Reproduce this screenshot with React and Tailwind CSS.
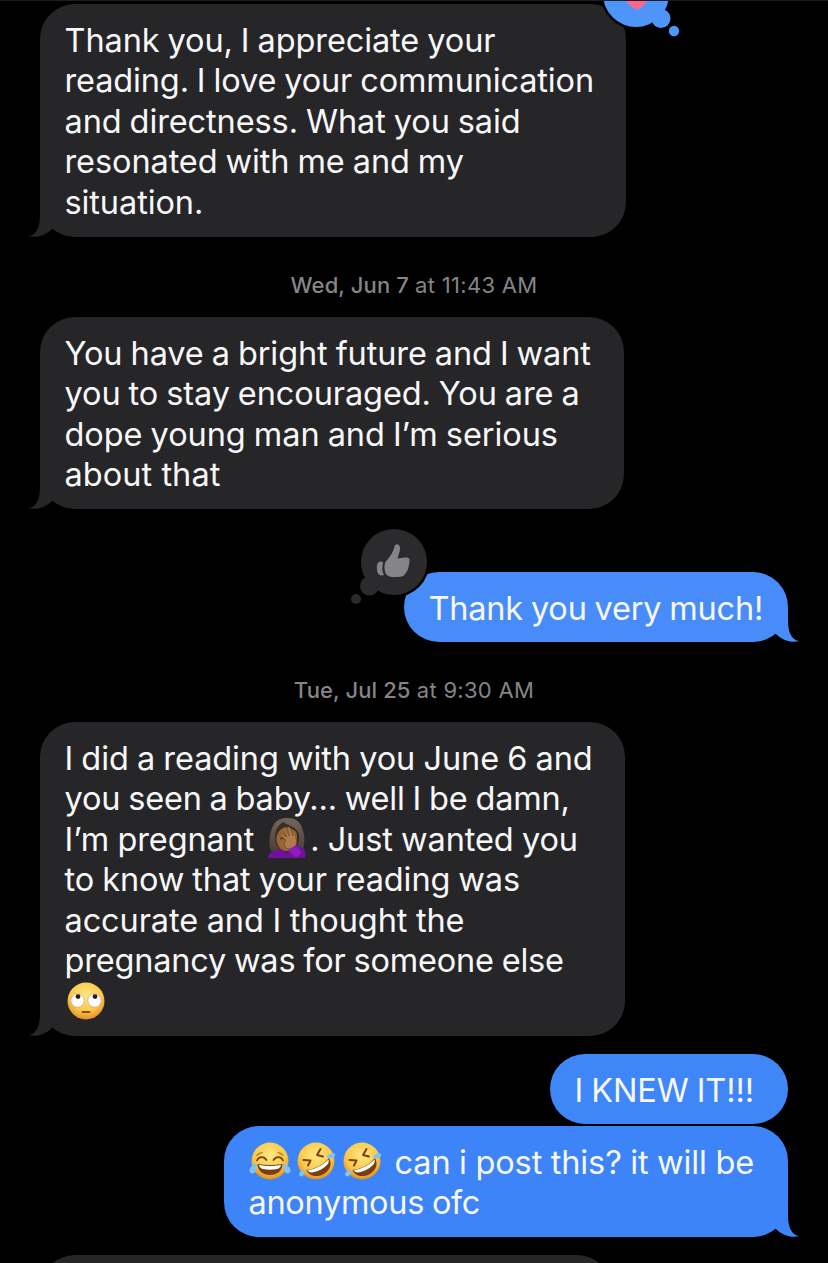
import React from "react";
import clsx from "clsx";

const Tail = ({ mine, className }) => (
    <svg
        viewBox="0 0 30 34"
        className={clsx(
            "absolute bottom-0 h-[34px] w-[30px]",
            mine ? "-right-[11px] -scale-x-100" : "-left-[11px] text-[#262629]",
            className
        )}
    >
        <path
            d="M11 0V12C11 24 8 31 0 33.3C9 35 17 32 23 26L30 20V0Z"
            fill="currentColor"
        />
    </svg>
);

const Bubble = ({ mine, tail, tailClass, reaction, className, children }) => (
    <div
        className={clsx(
            "relative shrink-0 rounded-[35px] pt-[16.75px] pl-[24.5px] text-[32.5px] leading-[40.5px] whitespace-nowrap text-[#f7f7f8]",
            mine ? "self-end mr-[40px]" : "self-start ml-[40px] bg-[#262629]",
            className
        )}
    >
        {tail && <Tail mine={mine} className={tailClass} />}
        {reaction}
        <div className="relative">{children}</div>
    </div>
);

const Line = ({ className = "tracking-[-0.1px] [word-spacing:-1px]", children }) => (
    <span className={clsx("block h-[40.55px]", className)}>{children}</span>
);

const Timestamp = ({ day, time, className }) => (
    <div className={clsx("h-[30px] shrink-0 text-center text-[22px] leading-[30px] whitespace-nowrap text-[#858587]", className)}>
        <span className="font-medium tracking-[0.1px]">{day}</span>{" "}
        <span className="tracking-[0.3px]">at {time}</span>
    </div>
);

const Gradients = () => (
    <defs>
        <radialGradient id="face" cx="50%" cy="35%" r="65%">
            <stop offset="0" stopColor="#ffe783" />
            <stop offset="0.65" stopColor="#fbc94a" />
            <stop offset="1" stopColor="#e18d26" />
        </radialGradient>
        <linearGradient id="hair" x1="0" y1="0" x2="0" y2="1">
            <stop offset="0" stopColor="#74645c" />
            <stop offset="1" stopColor="#4a3e3a" />
        </linearGradient>
    </defs>
);

const RollingEyes = () => (
    <svg viewBox="0 0 38 38" className="ml-[2.5px] -mt-[0.5px] inline-block size-[38px] align-top">
        <Gradients />
        <circle cx="19" cy="19" r="18.5" fill="url(#face)" />
        <circle cx="10.5" cy="18.5" r="6.7" fill="#fff" stroke="#c5a77e" strokeWidth="0.7" />
        <circle cx="27.5" cy="18.5" r="6.7" fill="#fff" stroke="#c5a77e" strokeWidth="0.7" />
        <circle cx="11" cy="14.6" r="2.4" fill="#2d1b12" />
        <circle cx="28" cy="14.6" r="2.4" fill="#2d1b12" />
        <path d="M15.5 30H22.5" stroke="#855014" strokeWidth="1.8" strokeLinecap="round" />
    </svg>
);

const TearsOfJoy = () => (
    <svg viewBox="0 0 42 38" className="inline-block h-[38px] w-[42px] align-top">
        <Gradients />
        <circle cx="21" cy="19" r="18.5" fill="url(#face)" />
        <path d="M8 18.5C10 14 15 14 17.5 18M24.5 18C27 14 32 14 34 18.5" fill="none" stroke="#7a430f" strokeWidth="1.8" strokeLinecap="round" />
        <path d="M8 13.5Q10 11 13 10.5M34 13.5Q32 11 29 10.5" fill="none" stroke="#a96a1d" strokeWidth="1.2" strokeLinecap="round" />
        <path d="M8.5 22Q21 24 33.5 22C33.5 29 28 33 21 33S8.5 29 8.5 22Z" fill="#79400f" />
        <path d="M10 23Q21 25 32 23Q31.5 26 28 27Q21 28.5 14 27Q10.5 26 10 23Z" fill="#fff" />
        <path d="M8 21C3 23 0 26 .5 29C2 33 6 32 7 28Z" fill="#7dc6f2" />
        <path d="M34 21C39 23 42 26 41.5 29C40 33 36 32 35 28Z" fill="#7dc6f2" />
    </svg>
);

const Rofl = () => (
    <svg viewBox="0 0 40 38" className="inline-block h-[38px] w-[40px] align-top">
        <Gradients />
        <circle cx="20" cy="19" r="18.5" fill="url(#face)" />
        <path d="M7.5 18L14.5 18.5L12 23.5M24.5 7L21 13L27 14.5" fill="none" stroke="#7a430f" strokeWidth="2" strokeLinecap="round" strokeLinejoin="round" />
        <path d="M10.5 28Q25 26 33 16C36.5 22 34 29 27 32.5C20 35.5 13 34 10.5 28Z" fill="#79400f" />
        <path d="M11.5 28.3Q25 26 32.5 17.5Q33.5 20 31 23Q25 29 16 30.5Q13 30.5 11.5 28.3Z" fill="#fff" />
        <path d="M31 14C34 11 38 10.5 39 12C40 15 36 17 31.5 16Z" fill="#7dc6f2" />
        <path d="M9 28C5 28 2 31 3.5 33.5C6 36 9 33 9 28Z" fill="#7dc6f2" />
    </svg>
);

const Facepalm = () => (
    <svg viewBox="0 0 40 42" className="mr-[3px] ml-[4.5px] -mt-[2.5px] inline-block h-[42px] w-[40px] align-top">
        <Gradients />
        <path d="M4 34C1 27 3 15 6 9C9 3 14 1 20 1C28 1 33 4 35 11C38 18 38 26 36 32L29 35H7Z" fill="url(#hair)" />
        <path d="M8 20C8 12 12 8 16 5C21 9 30 9 32 18C33 27 28 35 20 35C12 34 8 28 8 20Z" fill="#3c2c26" />
        <path d="M9.5 20C11 14 14 12 18 10C26 12 30 13 30 20C30 27 27 34 20 34C12 34 9 26 9.5 20Z" fill="#996638" />
        <path d="M1 41C1 36 5 34 13 32L20 36L28 29L36 31C39 34 39 38 38 41Z" fill="#6f119b" />
        <path d="M13 22Q15 20 17 22" fill="none" stroke="#51311f" strokeWidth="1.2" />
        <path d="M19 31C17 28 17 25 19 23L13 18C12 16 14 16 15 17L20 20L16 12C16 10 18 11 19 13L22.5 19L20.5 11C21 9 23 10 23.5 12L26 19L26 14C27 13 28 14 28 16L29.5 24C30 30 25 34 19 31Z" fill="#b17a49" stroke="#70472b" strokeWidth="0.6" />
        <path d="M21 33L29 28L35 36L29 41Z" fill="#8d1bbd" />
    </svg>
);

const LikeReaction = () => (
    <svg viewBox="0 0 82 82" className="absolute -left-[56px] -top-[46px] h-[82px] w-[82px]">
        <circle cx="46" cy="36" r="35.5" fill="#000" />
        <g fill="#2b2b2d">
            <circle cx="46" cy="36" r="33" />
            <circle cx="21.5" cy="60" r="9.5" />
            <circle cx="8" cy="73" r="5" />
        </g>
        <g fill="#858587">
            <path d="M37.5 36C41 32 45 27 46.5 20.5C47.5 17 52 18 52 22C52 26 50.5 28.5 49.5 32.5L57 31.5C60.5 31 62 32.5 61.5 35C61.5 37 61 39 60.5 41C60 43 59.5 45 58 46.5C57 49.5 54 51 49 51C43.5 51.5 39 50.5 37.5 47C36 43 36 39 37.5 36Z" />
            <path d="M31 36C35 34.5 35.5 36.5 34.5 40C34 44 34.5 47 36 49C32 50.5 29 48 29 43C28.5 40 29 37 31 36Z" />
        </g>
    </svg>
);

const HeartReaction = () => (
    <svg viewBox="0 0 82 40" className="absolute -right-[57px] -top-[4px] z-10 h-[40px] w-[82px]">
        <circle cx="35" cy="-6" r="35.5" fill="#000" />
        <g fill="#4e95fa">
            <circle cx="35" cy="-6" r="33" />
            <circle cx="60" cy="18.5" r="9.5" />
            <circle cx="73" cy="31" r="5.2" />
        </g>
        <path d="M20 -5C25 2 31 8 36 10C41 8 46 2 51 -5Z" fill="#f9698f" />
    </svg>
);

export default function App() {
    return (
        <main className="flex h-[1263px] w-[828px] flex-col overflow-hidden border-t border-[#1d1d1e] bg-black font-['Inter',sans-serif]">
            <Bubble tail reaction={<HeartReaction />} className="mt-[3px] h-[233px] w-[586px]">
                <Line>Thank you, I appreciate your</Line>
                <Line className="tracking-[-0.14px] [word-spacing:-1px]">reading. I love your communication</Line>
                <Line>and directness. What you said</Line>
                <Line>resonated with me and my</Line>
                <Line>situation.</Line>
            </Bubble>

            <Timestamp day="Wed, Jun 7" time="11:43 AM" className="mt-[33px]" />

            <Bubble tail className="mt-[17px] h-[192px] w-[584px]">
                <Line>You have a bright future and I want</Line>
                <Line>you to stay encouraged. You are a</Line>
                <Line className="tracking-[-0.06px] [word-spacing:-1px]">dope young man and I’m serious</Line>
                <Line className="tracking-[0.05px]">about that</Line>
            </Bubble>

            <Bubble
                mine
                tail
                tailClass="text-[#488cf9]"
                reaction={<LikeReaction />}
                className="mt-[63px] h-[70px] w-[384px] bg-[#488cf9]"
            >
                <Line className="tracking-[-0.2px] [word-spacing:-1px]">Thank you very much!</Line>
            </Bubble>

            <Timestamp day="Tue, Jul 25" time="9:30 AM" className="mt-[33px]" />

            <Bubble tail className="mt-[17px] h-[314px] w-[585px]">
                <Line className="tracking-[-0.1px] [word-spacing:-0.8px]">I did a reading with you June 6 and</Line>
                <Line className="tracking-[-0.2px] [word-spacing:-1px]">you seen a baby... well I be damn,</Line>
                <Line className="tracking-[-0.1px] [word-spacing:-0.8px]">
                    I’m pregnant <Facepalm />. Just wanted you
                </Line>
                <Line>to know that your reading was</Line>
                <Line className="tracking-[-0.1px] [word-spacing:-0.4px]">accurate and I thought the</Line>
                <Line className="tracking-[-0.2px] [word-spacing:-1px]">pregnancy was for someone else</Line>
                <Line><RollingEyes /></Line>
            </Bubble>

            <Bubble mine className="mt-[18px] h-[70px] w-[238px] bg-[#3f86f8]">
                <Line>I KNEW IT!!!</Line>
            </Bubble>

            <Bubble mine tail tailClass="text-[#3c84f7]" className="mt-[2px] h-[111px] w-[564px] bg-[#3c84f7]">
                <Line className="tracking-[-0.1px] [word-spacing:-0.5px]">
                    <span className="-mt-px mr-[13px] inline-flex gap-[5.5px] align-top">
                        <TearsOfJoy />
                        <Rofl />
                        <Rofl />
                    </span>
                    can i post this? it will be
                </Line>
                <Line className="tracking-[-0.3px] [word-spacing:-1px]">anonymous ofc</Line>
            </Bubble>

            <Bubble className="mt-[18px] h-[70px] w-[572px]" />
        </main>
    );
}
